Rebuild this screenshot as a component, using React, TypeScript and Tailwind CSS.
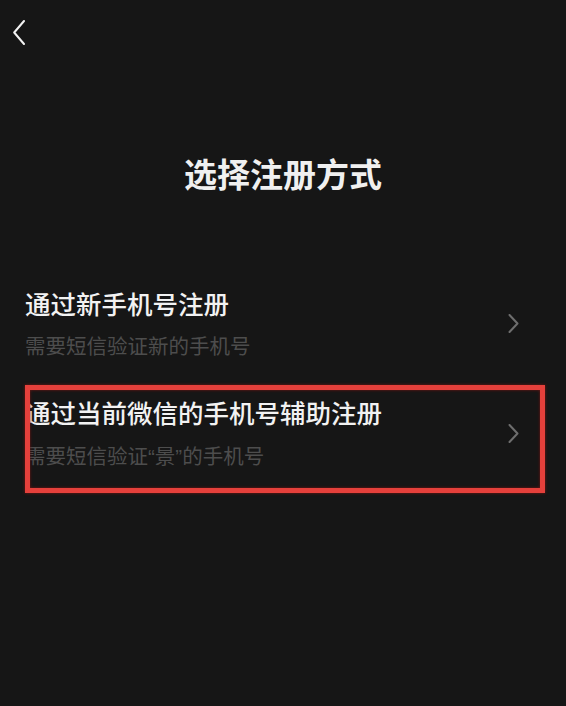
import React from "react";

function Chevron({ color, className }: { color: string; className?: string }) {
  return (
    <svg viewBox="0 0 11 19" className={className} fill="none">
      <polyline points="1.5,1 9.5,9.5 1.5,18" stroke={color} strokeWidth="2" strokeLinecap="round" strokeLinejoin="round" />
    </svg>
  );
}

export default function App() {
  return (
    <div className="w-[566px] h-[706px] bg-[#161616] flex flex-col overflow-hidden font-['Noto_Sans_CJK_SC',sans-serif]">
      <div className="pt-[20px] pl-[13px]">
        <svg viewBox="0 0 12 25" className="w-[12px] h-[25px]" fill="none">
          <polyline points="11,1 1.2,12.5 11,24" stroke="#f2f2f2" strokeWidth="2" strokeLinecap="round" strokeLinejoin="round" />
        </svg>
      </div>

      <h1 className="mt-[108px] text-center text-[33px] leading-[40px] font-bold text-[#f0f0f0]">
        选择注册方式
      </h1>

      <div className="mt-[83px] pl-[25px] pr-[21px] flex flex-col gap-[5px]">
        <div className="flex items-center pt-[12px] pb-[22px]">
          <div className="flex-1 flex flex-col gap-[14px]">
            <div className="text-[25.5px] leading-[30px] font-medium text-[#f2f2f2]">通过新手机号注册</div>
            <div className="text-[20.5px] leading-[26px] text-[#4d4d4d]">需要短信验证新的手机号</div>
          </div>
          <Chevron color="#6e6e6e" className="w-[11px] h-[19px] mr-[26px]" />
        </div>

        <div className="relative flex items-center pt-[12px] pb-[23px]">
          <div className="flex-1 flex flex-col gap-[15px]">
            <div className="text-[25.5px] leading-[30px] font-medium text-[#f2f2f2]">通过当前微信的手机号辅助注册</div>
            <div className="text-[20.5px] leading-[26px] text-[#4d4d4d]">
              需要短信验证<span className="font-['Liberation_Sans',sans-serif]">“</span>景<span className="font-['Liberation_Sans',sans-serif]">”</span>的手机号
            </div>
          </div>
          <Chevron color="#6e6e6e" className="w-[11px] h-[19px] mr-[26px]" />
          <div className="absolute inset-0 border-[5px] border-[#e5403b] shadow-[0_0_3px_#7a1512,inset_0_0_3px_#7a1512] pointer-events-none" />
        </div>
      </div>
    </div>
  );
}
